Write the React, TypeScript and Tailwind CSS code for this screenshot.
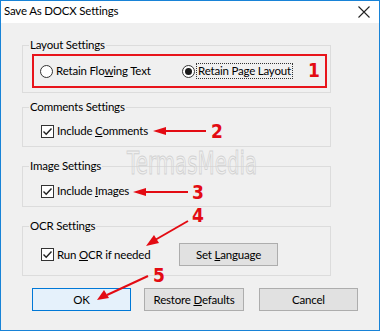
import React from "react";

// --- small Windows-like controls ---
const Radio = ({ checked }: { checked?: boolean }) => (
  <span className="flex h-[13px] w-[13px] shrink-0 items-center justify-center rounded-full border border-[#333] bg-white">
    {checked && <span className="h-[7px] w-[7px] rounded-full bg-[#1a1a1a]" />}
  </span>
);

const Check = () => (
  <span className="flex h-[13px] w-[13px] shrink-0 items-center justify-center border border-[#333] bg-white">
    <svg width="11" height="11" viewBox="0 0 11 11">
      <path d="M1.5 5.5 L4.2 8.2 L9.5 2.5" fill="none" stroke="#222" strokeWidth="1.4" />
    </svg>
  </span>
);

const Group = ({ label, className, children }: { label: string; className: string; children: React.ReactNode }) => (
  <div className={`ml-[21px] w-[309px] border border-[#dcdcdc] ${className}`}>
    <div className="-mt-[9px] ml-[6px] w-fit bg-[#f0f0f0] px-[1px] leading-[16px]">{label}</div>
    {children}
  </div>
);

const Btn = ({ children, primary, className }: { children: React.ReactNode; primary?: boolean; className?: string }) => (
  <div
    className={`flex h-[23px] w-[99px] items-center justify-center border ${
      primary ? "border-[#0078d7] bg-[#e5f1fb]" : "border-[#adadad] bg-[#e1e1e1]"
    } ${className ?? ""}`}
  >
    <span className="whitespace-nowrap">{children}</span>
  </div>
);

const Num = ({ n, className }: { n: string; className: string }) => (
  <span className={`absolute font-['DejaVu_Sans_Condensed',sans-serif] text-[19px] leading-none font-bold tracking-normal text-[#e30b13] ${className}`}>
    {n}
  </span>
);

export default function App() {
  return (
    <div className="relative flex h-[331px] w-[380px] flex-col overflow-hidden border border-[#1883d7] bg-[#f0f0f0] font-['Lato',sans-serif] text-[11.5px] tracking-[-0.2px] text-black">
      {/* Titelleiste */}
      <div className="flex h-[22px] shrink-0 items-center justify-between bg-white pl-[3px] pr-[9px]">
        <span className="-mt-[2px] leading-none">Save As DOCX Settings</span>
        <svg width="12" height="12" viewBox="0 0 12 12">
          <path d="M0.5 0.5 L11.5 11.5 M11.5 0.5 L0.5 11.5" stroke="#222" strokeWidth="1.1" />
        </svg>
      </div>

      {/* Layout */}
      <Group label="Layout Settings" className="mt-[22px] pb-[4px]">
        <div className="mt-[1px] ml-[9px] flex h-[34px] w-[295px] items-center border-2 border-[#e8141b] pl-[6px] whitespace-nowrap">
          <Radio />
          <span className="ml-[3px] w-[126px]">
            Retain Flo<u>w</u>ing Text
          </span>
          <Radio checked />
          <span className="ml-[1px] border border-dotted border-[#333] px-[1px] leading-[14px]">
            Retain Pa<u>g</u>e Layout
          </span>
        </div>
      </Group>

      {/* Comments */}
      <Group label="Comments Settings" className="mt-[14px] pb-[7px]">
        <div className="mt-[8px] ml-[18px] flex h-[16px] items-center gap-[3px] whitespace-nowrap">
          <Check />
          <span>
            Include <u>C</u>omments
          </span>
        </div>
      </Group>

      {/* Images */}
      <Group label="Image Settings" className="mt-[19px] pb-[7px]">
        <div className="mt-[9px] ml-[18px] flex h-[16px] items-center gap-[3px] whitespace-nowrap">
          <Check />
          <span>
            Include <u>I</u>mages
          </span>
        </div>
      </Group>

      {/* OCR */}
      <Group label="OCR Settings" className="mt-[19px] pb-[9px]">
        <div className="mt-[9px] ml-[18px] flex h-[23px] items-center whitespace-nowrap">
          <Check />
          <span className="ml-[3px] w-[122px]">
            Run <u>O</u>CR if needed
          </span>
          <Btn>
            Set <u>L</u>anguage
          </Btn>
        </div>
      </Group>

      {/* Buttons */}
      <div className="mt-[12px] ml-[31px] flex">
        <Btn primary>OK</Btn>
        <Btn className="ml-[13px] w-[100px]">
          Restore <u>D</u>efaults
        </Btn>
        <Btn className="ml-[15px]">Cancel</Btn>
      </div>

      {/* Wasserzeichen */}
      <span className="pointer-events-none absolute top-[146px] left-[126px] origin-left scale-x-[0.62] font-['DejaVu_Sans',sans-serif] text-[32px] leading-none tracking-normal text-transparent [-webkit-text-stroke:1px_#d2d2d2]">
        TermasMedia
      </span>

      {/* Markierungen: Pfeile + Nummern */}
      <svg className="pointer-events-none absolute top-[-1px] left-[-1px]" width="380" height="331">
        <g stroke="#e30b13" strokeWidth="2" fill="#e30b13">
          <line x1="163" y1="131" x2="206" y2="131" />
          <polygon points="153,131 166,127 166,135" stroke="none" />
          <line x1="143" y1="192" x2="188" y2="192" />
          <polygon points="133,192 146,188 146,196" stroke="none" />
          <line x1="188" y1="221" x2="155" y2="240" />
          <polygon points="146,246 154,235 159,243" stroke="none" />
          <line x1="148" y1="276" x2="107" y2="295" />
          <polygon points="97,300 104,290 109,298" stroke="none" />
        </g>
      </svg>
      <Num n="1" className="top-[60px] left-[307px]" />
      <Num n="2" className="top-[121px] left-[210px]" />
      <Num n="3" className="top-[182px] left-[191px]" />
      <Num n="4" className="top-[205px] left-[191px]" />
      <Num n="5" className="top-[265px] left-[152px]" />
    </div>
  );
}
